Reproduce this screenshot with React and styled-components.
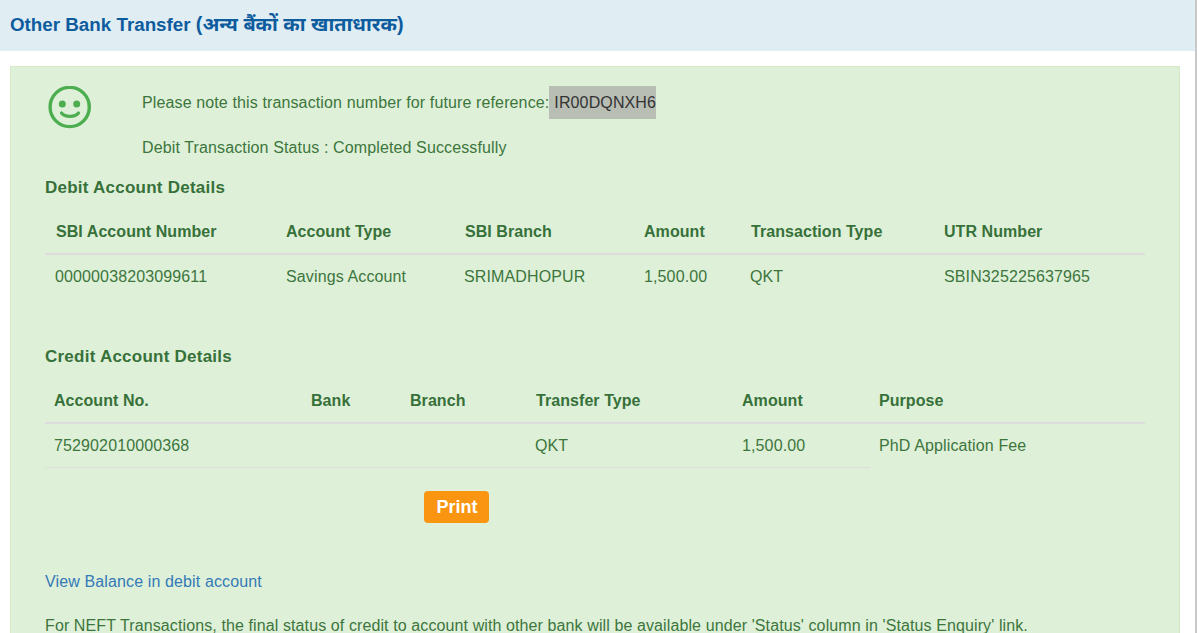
import React from "react";
import styled, { createGlobalStyle } from "styled-components";

const GlobalStyle = createGlobalStyle`
    html, body {
        margin: 0;
        padding: 0;
        height: 633px;
        overflow: hidden;
        background: #fff;
    }
    body {
        font-family: "Liberation Sans", Arial, "Noto Sans", sans-serif;
        font-size: 16px;
        letter-spacing: 0.125px;
        color: #3c763d;
    }
`;

const Page = styled.div`
    height: 633px;
    overflow: hidden;
    border-right: 2px solid #c8c8c8;
    box-sizing: border-box;
`;

const TitleBar = styled.div`
    height: 51px;
    background: #e0edf3;
    padding: 0 0 5px 10px;
    box-sizing: border-box;
    display: flex;
    align-items: center;
`;

const Title = styled.h1`
    margin: 0;
    font-size: 18.8px;
    letter-spacing: 0;
    font-weight: bold;
    color: #0d5c9e;
`;

const HindiTitle = styled.span`
    font-size: 19.8px;
`;

const Alert = styled.div`
    margin: 15px 15px 0 10px;
    padding: 19px 34px 30px 34px;
    background: #dff0d8;
    border: 1px solid #d6e9c6;
`;

const StatusBlock = styled.div`
    display: flex;
`;

const SmileSlot = styled.div`
    width: 97px;
    padding-left: 2px;
    box-sizing: border-box;
`;

const Messages = styled.div`
    display: flex;
    flex-direction: column;
    gap: 20px;
`;

const Message = styled.div`
    line-height: 33px;
    height: 33px;

    & + & {
        line-height: 18px;
        height: 18px;
    }
`;

const TxnNumber = styled.span`
    display: inline-block;
    padding: 0 0 0 5px;
    background: #b8beb4;
    color: #333;
`;

const SectionTitle = styled.h2`
    margin: ${(p) => p.$top}px 0 0;
    font-size: 17px;
    letter-spacing: 0.24px;
    line-height: 20px;
    font-weight: bold;
    color: #37713a;
`;

const DetailTable = styled.table`
    width: 1100px;
    table-layout: fixed;
    border-collapse: collapse;
    margin-top: 12px;
`;

const HeadCell = styled.th`
    height: 44px;
    padding: 1px 0 0 ${(p) => p.$pad || 9}px;
    text-align: left;
    font-size: 16px;
    letter-spacing: 0.06px;
    font-weight: bold;
    color: #37713a;
    border-bottom: 2px solid #dddddd;
    box-sizing: border-box;
`;

const Cell = styled.td`
    height: 45px;
    padding: 1px 0 0 ${(p) => p.$pad || 9}px;
    font-size: 16px;
    border-bottom: 1px solid ${(p) => (p.$line ? "#dddddd" : "transparent")};
    box-sizing: border-box;
`;

const PrintRow = styled.div`
    margin-top: 23px;
    padding-left: 379px;
`;

const PrintButton = styled.button`
    width: 65px;
    height: 32px;
    border: 0;
    border-radius: 4px;
    padding: 0 0 0 1px;
    background: #f99511;
    color: #fff;
    font-family: inherit;
    font-size: 18px;
    font-weight: bold;
`;

const BalanceLink = styled.a`
    display: block;
    margin-top: 50px;
    line-height: 18px;
    color: #337ab7;
    text-decoration: none;
`;

const Note = styled.p`
    margin: 26px 0 0;
    line-height: 18px;
    letter-spacing: 0.105px;
    white-space: nowrap;
`;

function Smile() {
    return (
        <svg width="46" height="44" viewBox="0 0 46 44" fill="none">
            <circle cx="22.7" cy="21" r="19.6" stroke="#4cae4f" strokeWidth="3.4" />
            <circle cx="15.3" cy="18" r="3.5" fill="#4cae4f" />
            <circle cx="29.7" cy="18" r="3.5" fill="#4cae4f" />
            <path d="M14.5 27 C18 31.5 28 31.5 31.5 27" stroke="#4cae4f" strokeWidth="3.2" strokeLinecap="round" />
        </svg>
    );
}

const debitCols = [230, 179, 179, 107, 193, 212];
const creditCols = [257, 99, 126, 206, 137, 275];

function App() {
    return (
        <Page>
            <GlobalStyle />
            <TitleBar>
                <Title>
                    Other Bank Transfer <HindiTitle>(अन्य बैंकों का खाताधारक)</HindiTitle>
                </Title>
            </TitleBar>
            <Alert>
                <StatusBlock>
                    <SmileSlot>
                        <Smile />
                    </SmileSlot>
                    <Messages>
                        <Message>
                            Please note this transaction number for future reference:<TxnNumber>IR00DQNXH6</TxnNumber>
                        </Message>
                        <Message>Debit Transaction Status : Completed Successfully</Message>
                    </Messages>
                </StatusBlock>

                <SectionTitle $top={21}>Debit Account Details</SectionTitle>
                <DetailTable>
                    <colgroup>
                        {debitCols.map((w, i) => (
                            <col key={i} width={w} />
                        ))}
                    </colgroup>
                    <thead>
                        <tr>
                            <HeadCell $pad={11}>SBI Account Number</HeadCell>
                            <HeadCell $pad={11}>Account Type</HeadCell>
                            <HeadCell $pad={11}>SBI Branch</HeadCell>
                            <HeadCell $pad={11}>Amount</HeadCell>
                            <HeadCell $pad={11}>Transaction Type</HeadCell>
                            <HeadCell $pad={11}>UTR Number</HeadCell>
                        </tr>
                    </thead>
                    <tbody>
                        <tr>
                            <Cell $pad={10}>00000038203099611</Cell>
                            <Cell $pad={11}>Savings Account</Cell>
                            <Cell $pad={10}>SRIMADHOPUR</Cell>
                            <Cell $pad={11}>1,500.00</Cell>
                            <Cell $pad={10}>QKT</Cell>
                            <Cell $pad={11}>SBIN325225637965</Cell>
                        </tr>
                    </tbody>
                </DetailTable>

                <SectionTitle $top={47}>Credit Account Details</SectionTitle>
                <DetailTable>
                    <colgroup>
                        {creditCols.map((w, i) => (
                            <col key={i} width={w} />
                        ))}
                    </colgroup>
                    <thead>
                        <tr>
                            <HeadCell>Account No.</HeadCell>
                            <HeadCell>Bank</HeadCell>
                            <HeadCell>Branch</HeadCell>
                            <HeadCell>Transfer Type</HeadCell>
                            <HeadCell>Amount</HeadCell>
                            <HeadCell>Purpose</HeadCell>
                        </tr>
                    </thead>
                    <tbody>
                        <tr>
                            <Cell $line>752902010000368</Cell>
                            <Cell $line />
                            <Cell $line />
                            <Cell $line $pad={8}>QKT</Cell>
                            <Cell $line>1,500.00</Cell>
                            <Cell>PhD Application Fee</Cell>
                        </tr>
                    </tbody>
                </DetailTable>

                <PrintRow>
                    <PrintButton>Print</PrintButton>
                </PrintRow>
                <BalanceLink href="#">View Balance in debit account</BalanceLink>
                <Note>
                    For NEFT Transactions, the final status of credit to account with other bank will be available under 'Status' column in 'Status Enquiry' link.
                </Note>
            </Alert>
        </Page>
    );
}

export default App;
